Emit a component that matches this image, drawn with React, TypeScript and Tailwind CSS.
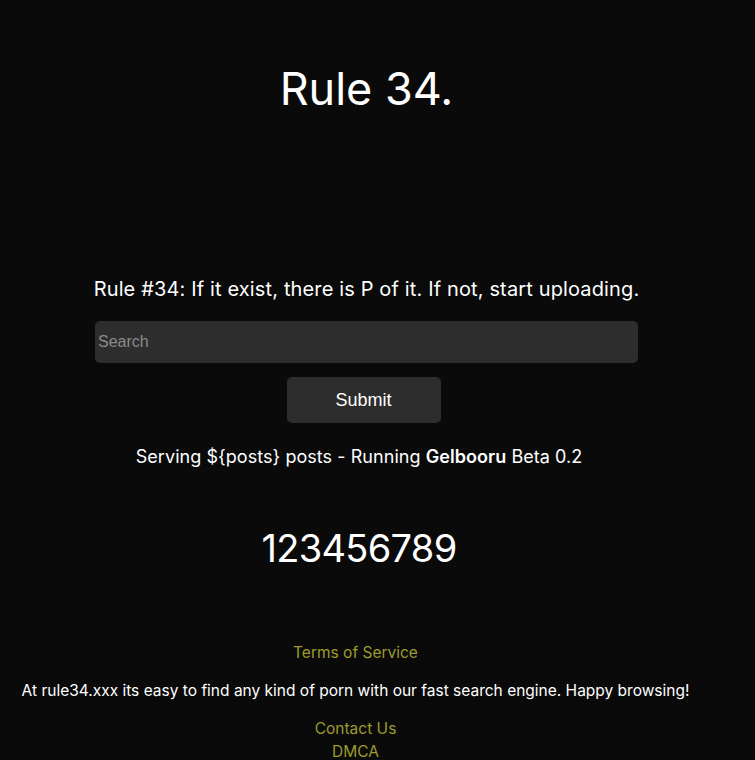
import React from "react";

export default function App() {
  return (
    <div className="min-h-screen w-full bg-[#0a0a0a] text-white font-['Inter',sans-serif]">
      <div className="w-[733px] flex flex-col items-center pt-[62px]">
        <h1 className="text-[45px] leading-[53px] font-normal">Rule 34.</h1>
        <div className="w-[543px] mt-[160px] flex flex-col items-center">
          <p className="text-[20px] leading-[28px] tracking-[0.14px] whitespace-nowrap">
            Rule #34: If it exist, there is P of it. If not, start uploading.
          </p>
          <input
            type="text"
            placeholder="Search"
            className="mt-[18px] w-[543px] h-[42px] rounded-[5px] bg-[#2d2d2d] pl-[3px] text-[16px] font-['Liberation_Sans',Arial,sans-serif] text-white placeholder:text-[#8a8a8a] outline-none"
          />
          <button className="mt-[14px] mr-[6px] w-[154px] h-[46px] rounded-[5px] bg-[#2d2d2d] text-[18px] font-['Liberation_Sans',Arial,sans-serif] text-white">
            Submit
          </button>
        </div>
      </div>
      <div className="w-[718px] flex flex-col items-center">
        <p className="mt-[21px] text-[18px] leading-[26px] tracking-[0.05px] whitespace-nowrap">
          Serving ${"{posts}"} posts - Running <b className="font-semibold">Gelbooru</b> Beta 0.2
        </p>
        <p className="mt-[53px] text-[38px] leading-[50px] tracking-[-0.7px]">123456789</p>
      </div>
      <div className="w-[711px] flex flex-col items-center pb-4">
        <a className="mt-[69px] text-[15.5px] leading-[22px] text-[#9d9b2e]">Terms of Service</a>
        <p className="mt-[16px] text-[15.5px] leading-[22px] whitespace-nowrap">
          At rule34.xxx its easy to find any kind of porn with our fast search engine. Happy browsing!
        </p>
        <a className="mt-[16px] text-[15.5px] leading-[22px] text-[#9d9b2e]">Contact Us</a>
        <a className="mt-[1px] text-[15.5px] leading-[22px] text-[#9d9b2e]">DMCA</a>
      </div>
    </div>
  );
}
